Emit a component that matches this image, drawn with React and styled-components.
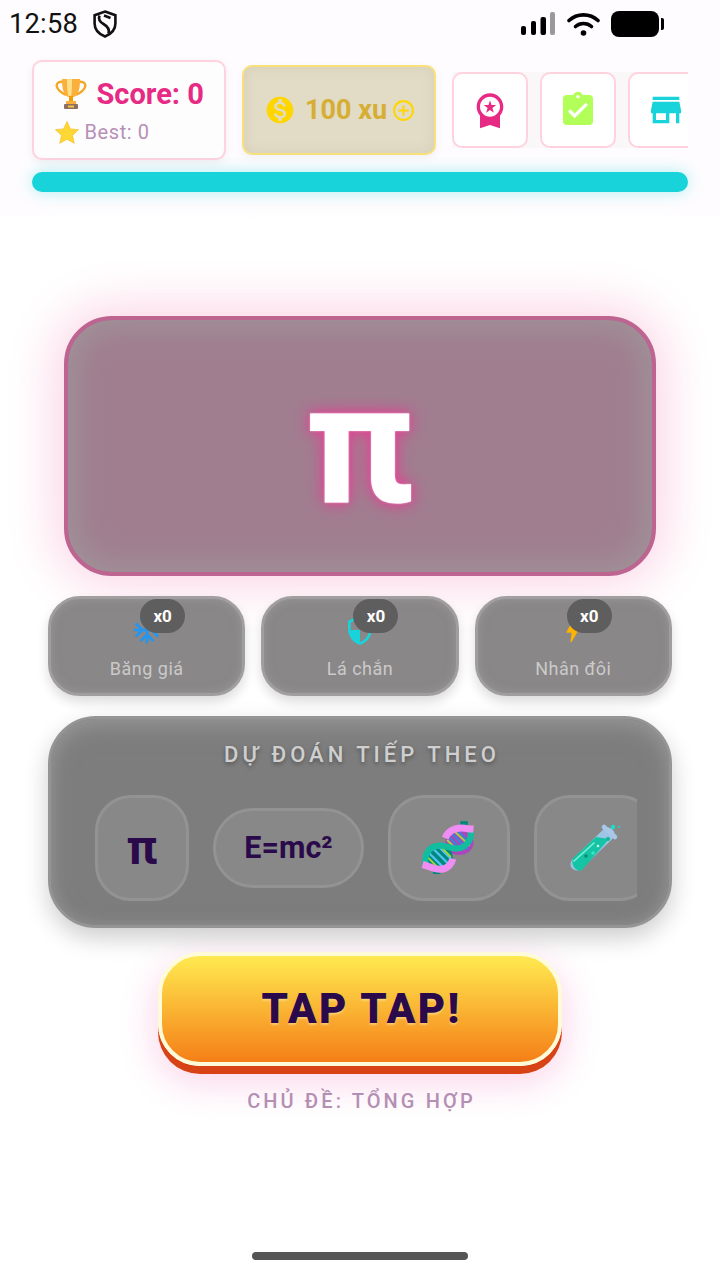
import React from "react";
import styled, { createGlobalStyle } from "styled-components";

const Global = createGlobalStyle`
  html, body { margin: 0; padding: 0; background: #fff; }
  * { box-sizing: border-box; }
  body { font-family: Roboto, "Noto Sans", sans-serif; }
`;

const Page = styled.div`
  width: 720px; height: 1280px; display: flex; flex-direction: column; overflow: hidden;
  background: linear-gradient(#fefcfe 0, #fefcfe 208px, #fff 220px);
`;
const StatusBar = styled.div`
  height: 48px; display: flex; align-items: center; justify-content: space-between;
  padding: 0 56px 0 9px; color: #111;
`;
const StatusLeft = styled.div`display: flex; align-items: center; gap: 14px;`;
const Clock = styled.span`font-size: 27.3px; letter-spacing: .2px; line-height: 48px;`;
const StatusRight = styled.div`display: flex; align-items: center; gap: 11.5px;`;

const Header = styled.header`padding: 12px 32px 24px; display: flex; flex-direction: column; gap: 12px;`;
const TopRow = styled.div`display: flex; align-items: center; gap: 16px; height: 100px;`;
const ScoreCard = styled.div`
  width: 194px; height: 100px; flex: none; background: #fdfdfd; border: 2.5px solid #ffd2de; border-radius: 10px;
  box-shadow: 0 3px 10px rgba(0,0,0,.06); padding: 15px 0 0 20.5px; display: flex; flex-direction: column; gap: 9px;
`;
const ScoreLine = styled.div`display: flex; align-items: center; gap: 10px; font-size: 29px; font-weight: 700; color: #e72a84; line-height: 34px;`;
const BestLine = styled.div`display: flex; align-items: center; gap: 6px; font-size: 20px; color: #b88fb8; letter-spacing: .6px; line-height: 24px;`;
const CoinCard = styled.div`
  width: 194px; height: 90px; flex: none; display: flex; align-items: center; justify-content: center; gap: 9px;
  padding-left: 2px;
  background: #e2dbc6; border: 2.5px solid #f8e07c; border-radius: 10px;
  box-shadow: inset 0 0 12px rgba(180,170,140,.25), 0 3px 10px rgba(0,0,0,.05);
`;
const CoinText = styled.span`font-size: 27px; font-weight: 700; color: #d6ae34; margin-right: -5px;`;
const ToolScroller = styled.div`
  flex: none; width: 236px; height: 76px; display: flex; gap: 12px; overflow: hidden; background: #faf7f9;
`;
const ToolButton = styled.div`
  width: 76px; height: 76px; flex: none; display: flex; align-items: center; justify-content: center;
  background: #fff; border: 2.5px solid #ffd2de; border-radius: 10px;
`;
const Progress = styled.div`
  height: 20px; border-radius: 10px; background: #19d3da; box-shadow: 0 0 16px rgba(25,211,218,.35);
`;

const Main = styled.main`padding: 100px 48px 0; display: flex; flex-direction: column; align-items: center;`;
const SymbolCard = styled.div`
  width: 592px; height: 260px; flex: none; display: flex; align-items: center; justify-content: center;
  background: #a07e90; border: 4px solid #bd6490; border-radius: 48px;
  box-shadow: inset 0 0 34px 4px rgba(160,155,155,.85), 0 0 50px 8px rgba(233,30,120,.2);
`;
const Symbol = styled.div`
  font-family: Roboto, sans-serif; font-size: 168px; font-weight: 700; color: #fff; line-height: 122px; height: 122px;
  text-shadow: 0 0 2px rgba(255,225,240,.8), 0 0 10px rgba(240,50,150,.75), 0 0 20px rgba(240,60,150,.75);
  clip-path: inset(13px -30px -30px -30px);
`;
const Powers = styled.div`display: flex; gap: 16px; width: 624px; margin-top: 20px;`;
const PowerCard = styled.div`
  flex: 1; height: 100px; border-radius: 32px; background: #898787; border: 3px solid #a09e9e;
  box-shadow: inset 0 0 10px rgba(170,165,165,.5), 0 6px 12px rgba(0,0,0,.14);
  display: flex; flex-direction: column; align-items: center; padding-top: 15px; gap: 13px;
`;
const IconWrap = styled.div`position: relative; width: 32px; height: 32px; flex: none;`;
const Badge = styled.span`
  position: absolute; left: 9.5px; top: -15px; width: 45px; height: 34px; border-radius: 17px; background: #5f5e5e;
  color: #fff; font-size: 17px; font-weight: 700; display: flex; align-items: center; justify-content: center;
`;
const PowerLabel = styled.span`font-size: 18px; font-weight: 400; color: #cbcaca; letter-spacing: .5px; line-height: 20px;`;

const Panel = styled.section`
  width: 624px; height: 212px; margin-top: 20px; border-radius: 48px; background: #7d7d7d; border: 3px solid #959595;
  box-shadow: inset 0 8px 22px rgba(160,160,160,.55), inset 0 0 14px rgba(160,160,160,.4), 0 10px 24px rgba(0,0,0,.2);
  padding: 21px 32px 0 44px; display: flex; flex-direction: column; align-items: center; gap: 25px;
`;
const PanelTitle = styled.h2`
  margin: 0 0 0 -8px; font-size: 22px; font-weight: 500; letter-spacing: 4px; color: #cfcfcf; line-height: 30px;
  text-shadow: 0 2px 4px rgba(0,0,0,.35);
`;
const ChipScroller = styled.div`
  width: 542px; height: 106px; flex: none; display: flex; align-items: center; gap: 24px; overflow: hidden;
`;
const Chip = styled.div`
  width: ${p => p.$w}px; height: ${p => p.$h}px; flex: none; display: flex; align-items: center; justify-content: center;
  background: #888; border: 3px solid #939393; border-radius: ${p => p.$r}px; color: #2a0a4a; font-weight: 700; font-size: ${p => p.$fs || 30.5}px;
  line-height: 1;
`;

const TapButton = styled.button`
  width: 404px; height: 114px; flex: none; margin-top: 24px; border-radius: 42px; border: 4px solid #fffbd8;
  background: linear-gradient(#ffea50, #f57f17); color: #2a0a4a; font-family: Roboto, sans-serif; font-size: 42px; font-weight: 900; letter-spacing: 2.4px;
  box-shadow: 0 8px 0 #d84315, 0 14px 36px 4px rgba(233,30,140,.18);
  text-shadow: 0 2px 2px rgba(255,235,180,.5);
  padding: 0 0 1px 3px;
`;
const Theme = styled.div`
  margin-top: 19px; padding-left: 3px; font-size: 20px; font-weight: 500; letter-spacing: 3.1px; color: #b48fb4; line-height: 32px;
`;
const HomeArea = styled.div`margin-top: auto; padding-bottom: 20px; display: flex; justify-content: center;`;
const HomeBar = styled.div`width: 216px; height: 8px; border-radius: 4px; background: #555;`;

const M = ({ d, size = 24, color = "currentColor" }) => (
  <svg width={size} height={size} viewBox="0 0 24 24" fill={color} style={{ display: "block", flex: "none" }}><path d={d} /></svg>
);

const Trophy = () => (
  <svg width="32" height="32" viewBox="0 0 32 32" style={{ flex: "none" }}>
    <path d="M8 4C3 3 1 6 2 9c1 4 5 6 9 8" fill="none" stroke="#f5a623" strokeWidth="2.4" />
    <path d="M24 4c5-1 7 2 6 5-1 4-5 6-9 8" fill="none" stroke="#f5a623" strokeWidth="2.4" />
    <path d="M7 1h18c0 9-1 15-6 18h-6C8 16 7 10 7 1z" fill="#fbb03b" />
    <path d="M12 1h5c0 7 0 13-1 18h-2c-2-5-2-11-2-18z" fill="#ffe08a" />
    <rect x="14" y="18" width="4" height="6" fill="#f29f05" />
    <rect x="11" y="23" width="10" height="3" fill="#fbb03b" />
    <rect x="9" y="26" width="14" height="5" rx="1" fill="#8d6e63" />
    <rect x="13" y="27.500" width="6" height="2" fill="#f5c542" />
  </svg>
);
const Star = () => (
  <svg width="24" height="23" viewBox="0 0 24 23" style={{ flex: "none" }}>
    <path d="M12 .5l3.4 7.4 8.1.9-6 5.5 1.7 8-7.2-4.1-7.2 4.1 1.7-8-6-5.5 8.1-.9z" fill="#fdd835" stroke="#fbc02d" strokeWidth=".8" strokeLinejoin="round" />
  </svg>
);
const Dna = () => (
  <svg width="66" height="62" viewBox="0 -2 70 65">
    <rect x="47" y="2" width="8" height="5" fill="#00897b" />
    <rect x="18" y="52" width="8" height="6" fill="#00897b" />
    <ellipse cx="46" cy="25" rx="15" ry="13" fill="#ab47bc" />
    <ellipse cx="24" cy="40" rx="15" ry="13" fill="#00897b" />
    <path d="M38 15l17 17M34 18l14 14M44 12l14 14" stroke="#3f7fd8" strokeWidth="2.4" />
    <path d="M33 22l11 11M41 13l16 15" stroke="#a5d63a" strokeWidth="2" />
    <path d="M14 36l14 14M18 31l16 16M23 28l15 15" stroke="#4fc3f7" strokeWidth="2.4" />
    <path d="M12 40l12 12M27 30l10 10" stroke="#a5d63a" strokeWidth="2" />
    <path d="M11 50C7 38 14 27 27 28c9 1 17 7 26-1 4-4 6-9 5-14" fill="none" stroke="#10bd9e" strokeWidth="6.5" />
    <path d="M31 20c4-10 15-12 24-10l6 .5" fill="none" stroke="#f08df2" strokeWidth="7.5" />
    <path d="M7 48c7 2 13 6 20 5 7-1 11-6 12-11" fill="none" stroke="#f08df2" strokeWidth="7.5" />
  </svg>
);
const Tube = () => (
  <svg width="56" height="54" viewBox="0 0 56 54">
    <line x1="10" y1="43" x2="41" y2="13" stroke="#9cc4e4" strokeWidth="13" strokeLinecap="round" />
    <path d="M6 37L29 16 l13 2 L15 49c-5 3-12-5-9-12z" fill="#14c4a4" />
    <line x1="7" y1="40" x2="27" y2="22" stroke="#7ff0d8" strokeWidth="1.6" strokeLinecap="round" />
    <line x1="37" y1="6" x2="48" y2="16" stroke="#a9c8e8" strokeWidth="4.500" strokeLinecap="round" />
    <circle cx="46" cy="6" r="2.2" fill="#16e0c8" />
    <circle cx="52" cy="6" r="1" fill="#16d8c0" />
    <circle cx="41" cy="18" r="2" fill="#10b496" />
    <circle cx="31" cy="25" r="1.3" fill="#d0fff2" />
    <circle cx="26" cy="32" r="1.8" fill="#38e6c6" />
    <circle cx="19" cy="35" r="1.8" fill="#0b8a76" />
  </svg>
);
const StatusShield = () => (
  <svg width="26" height="28" viewBox="0 0 26 28" fill="none" stroke="#111" strokeWidth="2.6">
    <path d="M13 1.6l10.4 3.6v8.3c0 6-4.3 10.6-10.4 13C6.9 24.100 2.600 19.500 2.600 13.500V5.200z" />
    <path d="M7.500 5.500c-1.500 4 .5 6.500 4 8.500 3.500 2 6.500 4.500 5 9.500M12 5.500l6.500 2.500" />
  </svg>
);
const Signal = () => (
  <svg width="34" height="24" viewBox="0 0 34 24">
    <rect x="0" y="14" width="5" height="9" rx="2" fill="#000" />
    <rect x="10" y="9" width="5" height="14" rx="2" fill="#000" />
    <rect x="19.500" y="5" width="5.500" height="18" rx="2" fill="#000" />
    <rect x="29" y="0" width="5" height="23" rx="2" fill="#999" />
  </svg>
);
const Wifi = () => (
  <svg width="33" height="24" viewBox="0 0 33 24" fill="none" stroke="#000" strokeWidth="3.600" strokeLinecap="round">
    <path d="M2 8.500C10 1 23 1 31 8.500" />
    <path d="M8.500 14.500c4.500-4 11.500-4 16 0" />
    <circle cx="16.500" cy="21" r="2.800" fill="#000" stroke="none" />
  </svg>
);
const BatteryBody = styled.div`width: 48px; height: 26px; border-radius: 8px; background: #000;`;
const BatteryNub = styled.div`width: 3px; height: 12px; background: #000; border-radius: 0 2px 2px 0; margin-left: 2px;`;
const Battery = styled.div`display: flex; align-items: center;`;

const paths = {
  coin: "M12 2C6.480 2 2 6.480 2 12s4.480 10 10 10 10-4.480 10-10S17.520 2 12 2zm1.410 16.090V20h-2.670v-1.930c-1.710-.36-3.160-1.460-3.270-3.400h1.960c.1 1.050.82 1.870 2.650 1.870 1.960 0 2.400-.98 2.400-1.590 0-.83-.44-1.610-2.670-2.140-2.480-.6-4.180-1.620-4.180-3.670 0-1.720 1.390-2.840 3.110-3.210V4h2.670v1.950c1.860.45 2.790 1.860 2.850 3.390H14.300c-.05-1.110-.64-1.870-2.220-1.870-1.500 0-2.400.68-2.400 1.640 0 .84.650 1.390 2.670 1.910s4.180 1.390 4.180 3.910c-.01 1.830-1.380 2.830-3.120 3.160z",
  plus: "M13 7h-2v4H7v2h4v4h2v-4h4v-2h-4V7zm-1-5C6.480 2 2 6.480 2 12s4.480 10 10 10 10-4.480 10-10S17.520 2 12 2zm0 18c-4.410 0-8-3.590-8-8s3.590-8 8-8 8 3.590 8 8-3.590 8-8 8z",
  premium: "M9.680 13.690 12 11.930l2.310 1.760-.88-2.850L15.750 9h-2.840L12 6.190 11.090 9H8.250l2.310 1.840-.88 2.850zM20 10c0-4.420-3.580-8-8-8s-8 3.580-8 8c0 2.030.76 3.870 2 5.280V23l6-2 6 2v-7.720c1.240-1.410 2-3.250 2-5.280zm-8-6c3.310 0 6 2.690 6 6s-2.690 6-6 6-6-2.690-6-6 2.690-6 6-6z",
  task: "M19 3h-4.180C14.400 1.840 13.300 1 12 1c-1.300 0-2.400.84-2.820 2H5c-1.100 0-2 .9-2 2v14c0 1.100.9 2 2 2h14c1.100 0 2-.9 2-2V5c0-1.100-.9-2-2-2zm-7 0c.55 0 1 .45 1 1s-.45 1-1 1-1-.45-1-1 .45-1 1-1zm-2 14l-4-4 1.410-1.410L10 14.170l6.590-6.590L18 9l-8 8z",
  store: "M20 4H4v2h16V4zm1 10v-2l-1-5H4l-1 5v2h1v6h10v-6h4v6h2v-6h1zm-9 4H6v-4h6v4z",
  snow: "M22 11h-4.170l3.240-3.240-1.410-1.420L15 11h-2V9l4.660-4.660-1.420-1.410L13 6.170V2h-2v4.170L7.760 2.930 6.340 4.340 11 9v2H9L4.340 6.340 2.930 7.760 6.170 11H2v2h4.170l-3.240 3.240 1.410 1.420L9 13h2v2l-4.660 4.660 1.420 1.410L11 17.830V22h2v-4.170l3.240 3.240 1.420-1.410L13 15v-2h2l4.660 4.660 1.410-1.420L17.830 13H22z",
  shield: "M12 1L3 5v6c0 5.550 3.840 10.740 9 12 5.160-1.260 9-6.450 9-12V5l-9-4zm0 10.990h7c-.53 4.120-3.280 7.790-7 8.940V12H5V6.300l7-3.110v8.800z",
  bolt: "M11 21h-1l1-7H7.500c-.58 0-.57-.32-.38-.66.19-.34.05-.08.07-.12C8.480 10.940 10.420 7.540 13 3h1l-1 7h3.500c.49 0 .56.33.47.51l-.07.15C12.960 17.550 11 21 11 21z",
};

const powers = [
  { label: "Băng giá", icon: paths.snow, color: "#2196f3" },
  { label: "Lá chắn", icon: paths.shield, color: "#19d3da" },
  { label: "Nhân đôi", icon: paths.bolt, color: "#ffb300" },
];

export default function App() {
  return (
    <Page>
      <Global />
      <StatusBar>
        <StatusLeft><Clock>12:58</Clock><StatusShield /></StatusLeft>
        <StatusRight>
          <Signal /><Wifi />
          <Battery><BatteryBody /><BatteryNub /></Battery>
        </StatusRight>
      </StatusBar>
      <Header>
        <TopRow>
          <ScoreCard>
            <ScoreLine><Trophy />Score: 0</ScoreLine>
            <BestLine><Star />Best: 0</BestLine>
          </ScoreCard>
          <CoinCard>
            <M d={paths.coin} size={32} color="#ffd600" />
            <CoinText>100 xu</CoinText>
            <M d={paths.plus} size={25} color="#ffd600" />
          </CoinCard>
          <ToolScroller>
            <ToolButton><M d={paths.premium} size={40} color="#e72a84" /></ToolButton>
            <ToolButton><M d={paths.task} size={40} color="#b2ff59" /></ToolButton>
            <ToolButton><M d={paths.store} size={40} color="#19d3da" /></ToolButton>
          </ToolScroller>
        </TopRow>
        <Progress />
      </Header>
      <Main>
        <SymbolCard>
          <Symbol>π</Symbol>
        </SymbolCard>
        <Powers>
          {powers.map(p => (
            <PowerCard key={p.label}>
              <IconWrap>
                <M d={p.icon} size={32} color={p.color} />
                <Badge>x0</Badge>
              </IconWrap>
              <PowerLabel>{p.label}</PowerLabel>
            </PowerCard>
          ))}
        </Powers>
        <Panel>
          <PanelTitle>DỰ ĐOÁN TIẾP THEO</PanelTitle>
          <ChipScroller>
            <Chip $w={94} $h={106} $r={36} $fs={48}>π</Chip>
            <Chip $w={151} $h={80} $r={40}>E=mc²</Chip>
            <Chip $w={122} $h={106} $r={36}><Dna /></Chip>
            <Chip $w={122} $h={106} $r={36}><Tube /></Chip>
          </ChipScroller>
        </Panel>
        <TapButton>TAP TAP!</TapButton>
        <Theme>CHỦ ĐỀ: TỔNG HỢP</Theme>
      </Main>
      <HomeArea><HomeBar /></HomeArea>
    </Page>
  );
}
